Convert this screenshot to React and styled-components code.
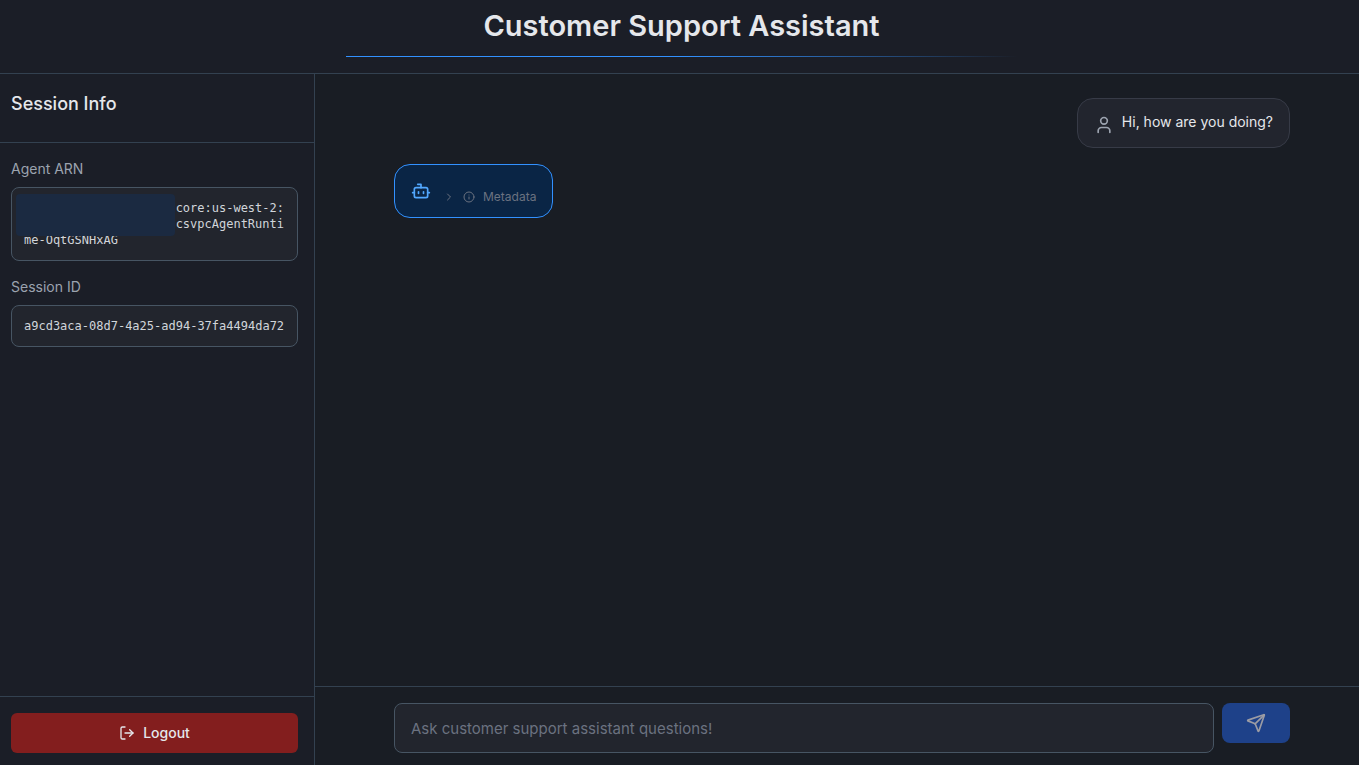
import React, { useState } from 'react';
import styled, { createGlobalStyle } from 'styled-components';
import { Bot, ChevronRight, Info, User, LogOut, Send } from 'lucide-react';

const sessionFields = [
  {
    id: 'agent-arn',
    label: 'Agent ARN',
    lines: ['core:us-west-2:', 'csvpcAgentRunti', 'me-OqtGSNHxAG'],
    masked: true,
  },
  {
    id: 'session-id',
    label: 'Session ID',
    lines: ['a9cd3aca-08d7-4a25-ad94-37fa4494da72'],
  },
];

function SessionField({ field }) {
  return (
    <Field>
      <FieldLabel id={field.id}>{field.label}</FieldLabel>
      <FieldValue aria-labelledby={field.id} $tall={field.masked}>
        {field.lines.map((line, i) => (
          <ValueLine key={line} $end={field.masked && i < 2}>
            {line}
          </ValueLine>
        ))}
        {field.masked && <Mask />}
      </FieldValue>
    </Field>
  );
}

function App() {
  const [text, setText] = useState('');

  return (
    <Page>
      <GlobalStyle />
      <Header>
        <Title>Customer Support Assistant</Title>
        <TitleLine />
      </Header>
      <Body>
        <Sidebar>
          <SidebarHeader>
            <h2>Session Info</h2>
          </SidebarHeader>
          <Fields>
            {sessionFields.map((field) => (
              <SessionField key={field.id} field={field} />
            ))}
          </Fields>
          <SidebarFooter>
            <LogoutButton type="button">
              <LogOut size={16} />
              Logout
            </LogoutButton>
          </SidebarFooter>
        </Sidebar>
        <Chat>
          <Messages>
            <UserBubble>
              <User size={20} />
              <p>Hi, how are you doing?</p>
            </UserBubble>
            <BotBubble>
              <Bot size={20} />
              <MetadataButton type="button">
                <ChevronRight size={12} />
                <Info size={12} />
                Metadata
              </MetadataButton>
            </BotBubble>
          </Messages>
          <Composer onSubmit={(e) => e.preventDefault()}>
            <ComposerInput
              type="text"
              aria-label="Message"
              placeholder="Ask customer support assistant questions!"
              value={text}
              onChange={(e) => setText(e.target.value)}
            />
            <SendButton type="submit" aria-label="Send">
              <Send size={20} />
            </SendButton>
          </Composer>
        </Chat>
      </Body>
    </Page>
  );
}

export default App;

const GlobalStyle = createGlobalStyle`
* {
  box-sizing: border-box;
}

body {
  margin: 0;
  background: #191d24;
  color: #e5e7eb;
  font-family: Inter, "Liberation Sans", sans-serif;
}

h1, h2, p {
  margin: 0;
}

button, input {
  font-family: inherit;
}
`;

const Page = styled.div`
  min-height: 100vh;
  display: flex;
  flex-direction: column;
`;

const Header = styled.header`
  display: flex;
  flex-direction: column;
  align-items: center;
  padding: 8px 0 16px 4px;
  background: #1b1e27;
  border-bottom: 1px solid #334150;
`;

const Title = styled.h1`
  font-size: 29px;
  line-height: 36px;
  font-weight: 600;
  padding-bottom: 12px;
`;

const TitleLine = styled.div`
  width: 50%;
  max-width: 672px;
  height: 1px;
  background: linear-gradient(to right, #3291ff 0%, #3291ff 50%, transparent 100%);
`;

const Body = styled.div`
  flex: 1;
  display: flex;
`;

const Sidebar = styled.aside`
  width: 315px;
  flex-shrink: 0;
  display: flex;
  flex-direction: column;
  background: #1b1e27;
  border-right: 1px solid #334150;
`;

const SidebarHeader = styled.div`
  padding: 16px 16px 24px 11px;
  border-bottom: 1px solid #334150;

  h2 {
    font-size: 18px;
    line-height: 28px;
    font-weight: 500;
  }
`;

const Fields = styled.div`
  flex: 1;
  display: flex;
  flex-direction: column;
  gap: 16px;
  padding: 16px 16px 16px 11px;
`;

const Field = styled.div`
  display: flex;
  flex-direction: column;
  gap: 8px;
`;

const FieldLabel = styled.span`
  font-size: 14px;
  line-height: 20px;
  font-weight: 400;
  color: #9ca3af;
`;

const FieldValue = styled.div`
  position: relative;
  min-height: ${(props) => (props.$tall ? '74px' : '42px')};
  padding: 12px 13px 12px 12px;
  border: 1px solid #475563;
  border-radius: 8px;
  background: #22252d;
  color: #d1d5db;
  font-family: "DejaVu Sans Mono", "Liberation Mono", monospace;
  font-size: 12px;
  line-height: 16px;
`;

const ValueLine = styled.div`
  text-align: ${(props) => (props.$end ? 'right' : 'left')};
  white-space: nowrap;
`;

const Mask = styled.div`
  position: absolute;
  left: 4px;
  top: 6px;
  width: 159px;
  height: 42px;
  border-radius: 4px;
  background: #1b2a41;
`;

const SidebarFooter = styled.div`
  padding: 16px 16px 12px 11px;
  border-top: 1px solid #334150;
`;

const LogoutButton = styled.button`
  width: 100%;
  height: 40px;
  display: flex;
  align-items: center;
  justify-content: center;
  gap: 8px;
  border: 0;
  border-radius: 6px;
  background: #831e1e;
  color: #e5e7eb;
  font-size: 14px;
  line-height: 20px;
  font-weight: 500;
  cursor: pointer;
`;

const Chat = styled.main`
  flex: 1;
  display: flex;
  flex-direction: column;
  min-width: 0;
`;

const Messages = styled.div`
  flex: 1;
  display: flex;
  flex-direction: column;
  gap: 16px;
  padding: 24px 69px 24px 79px;
`;

const Bubble = styled.div`
  display: flex;
  border-radius: 16px;
  padding: 0 16px;
`;

const UserBubble = styled(Bubble)`
  align-self: flex-end;
  align-items: flex-start;
  min-height: 50px;
  padding-top: 13px;
  gap: 8px;
  background: #22252e;
  border: 1px solid #373b47;

  svg {
    margin-top: 3px;
    color: #9ca3af;
  }

  p {
    font-size: 14px;
    line-height: 20px;
  }
`;

const BotBubble = styled(Bubble)`
  align-self: flex-start;
  min-height: 54px;
  padding-top: 16px;
  gap: 12px;
  background: #0a2545;
  border: 1px solid #3291ff;
  color: #52a8ff;
`;

const MetadataButton = styled.button`
  display: flex;
  align-items: center;
  align-self: flex-start;
  gap: 8px;
  height: 32px;
  padding: 0;
  border: 0;
  background: none;
  color: #6b7280;
  font-size: 12px;
  line-height: 16px;
  cursor: pointer;
`;

const Composer = styled.form`
  display: flex;
  align-items: flex-start;
  gap: 8px;
  padding: 16px 69px 12px 79px;
  border-top: 1px solid #334150;
`;

const ComposerInput = styled.input`
  flex: 1;
  min-width: 0;
  height: 50px;
  padding: 0 16px;
  border: 1px solid #475563;
  border-radius: 8px;
  background: #22252d;
  color: #e5e7eb;
  font-size: 15px;
  outline: none;

  &::placeholder {
    color: #6b7280;
    opacity: 1;
  }
`;

const SendButton = styled.button`
  width: 68px;
  height: 40px;
  display: flex;
  align-items: center;
  justify-content: center;
  padding: 0;
  border: 0;
  border-radius: 8px;
  background: #1e4189;
  color: #9c9ca4;
  cursor: pointer;
`;
